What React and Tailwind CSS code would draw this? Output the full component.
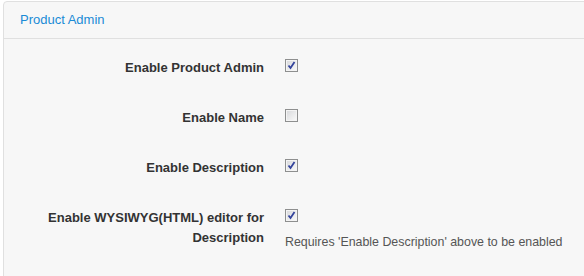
import React from 'react';

function Box({ checked }) {
  return (
    <span className="flex w-[13px] h-[13px] border border-[#8e8f8f] shadow-[inset_0_0_0_1px_#f4f4f4] bg-[linear-gradient(135deg,#d6d7da,#fbfbfb)] items-center justify-center">
      {checked && (
        <svg width="9" height="9" viewBox="0 0 9 9">
          <path d="M1.5 4.5 L3.5 7 L7.5 1" fill="none" stroke="#34449c" strokeWidth="1.8" />
        </svg>
      )}
    </span>
  );
}

const rows = [
  { label: 'Enable Product Admin', checked: true },
  { label: 'Enable Name', checked: false },
  { label: 'Enable Description', checked: true },
  { label: 'Enable WYSIWYG(HTML) editor for Description', checked: true, help: "Requires 'Enable Description' above to be enabled" },
];

export default function App() {
  return (
    <div className="w-[584px] h-[276px] overflow-hidden bg-white pl-[3px] pt-[1px] font-['Liberation_Sans',Arial,sans-serif]">
      <div className="w-[600px] h-[300px] bg-[#f7f7f7] border border-[#e0e0e0] rounded-tl-[4px]">
        {/* header */}
        <div className="h-[37px] border-b border-[#e0e0e0] pl-[16px] flex items-center">
          <span className="text-[13px] text-[#1a8bd6]">Product Admin</span>
        </div>

        {/* form rows */}
        <div className="pt-[19px]">
          {rows.map((r) => (
            <div key={r.label} className="flex items-start mb-[30px]">
              <div className="w-[260px] shrink-0 text-right text-[13px] leading-[20px] font-bold text-[#333] pl-[36px]">
                {r.label}
              </div>
              <div className="ml-[21px] pt-[1px] flex flex-col">
                <Box checked={r.checked} />
                {r.help && (
                  <div className="mt-[12px] text-[12.4px] leading-[16px] text-[#555] whitespace-nowrap">{r.help}</div>
                )}
              </div>
            </div>
          ))}
        </div>
      </div>
    </div>
  );
}
